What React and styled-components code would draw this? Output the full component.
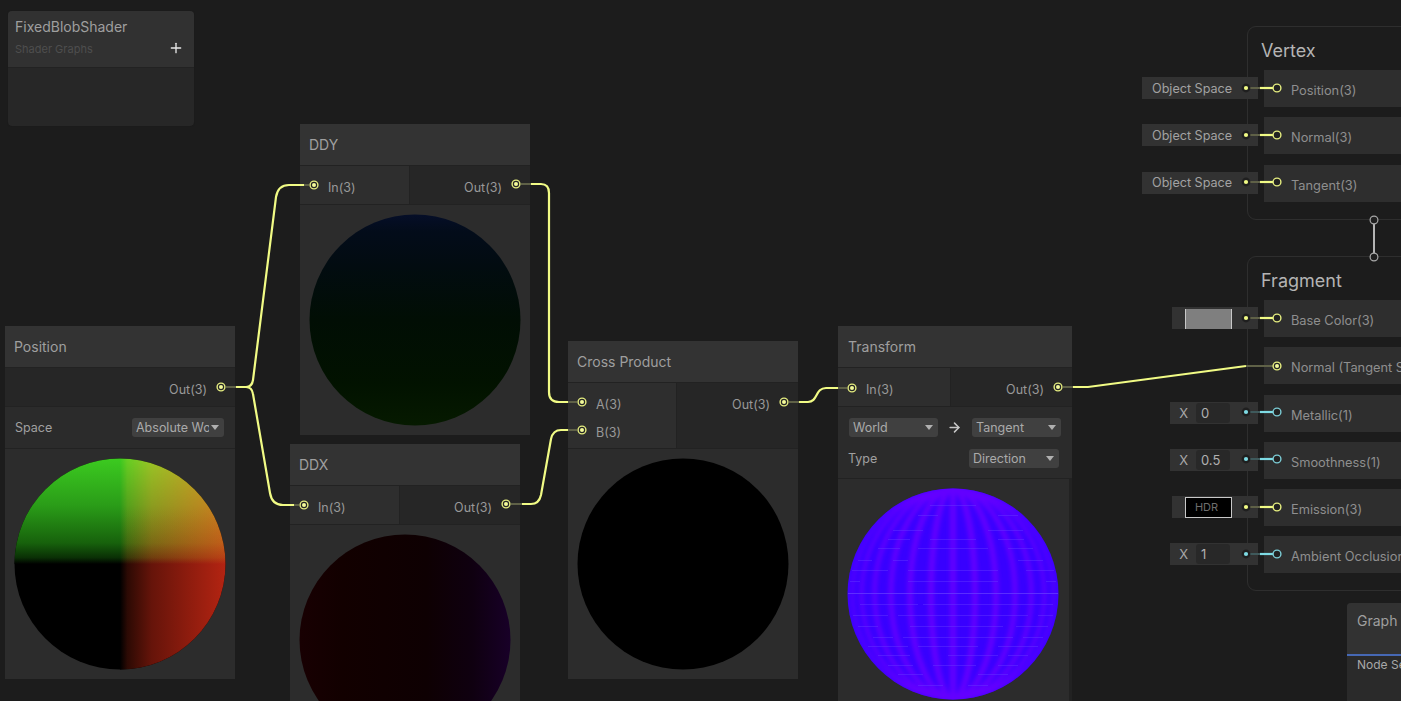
import React from "react";
import styled, { createGlobalStyle } from "styled-components";
import { Plus, ArrowRight } from "lucide-react";

const Global = createGlobalStyle`
  html, body { margin: 0; padding: 0; background: #1c1c1c; overflow: hidden; }
  body { font-family: Inter, "Noto Sans", "Liberation Sans", sans-serif; }
`;

const Canvas = styled.div`
  position: relative;
  width: 1401px;
  height: 701px;
  overflow: hidden;
  background: #1c1c1c;
`;

const Blackboard = styled.section`
  position: absolute;
  left: 8px;
  top: 11px;
  width: 186px;
  height: 115px;
  border-radius: 4px;
  overflow: hidden;
  background: #272727;
  box-shadow: 0 0 1px #141414;
`;
const BoardHead = styled.header`
  position: relative;
  height: 57px;
  padding: 7px 7px 0;
  box-sizing: border-box;
  background: #313131;
  border-bottom: 1px solid #222;
`;
const BoardTitle = styled.div`
  font-size: 14px;
  line-height: 18px;
  color: #9f9f9f;
`;
const BoardSub = styled.div`
  margin-top: 6px;
  font-size: 11px;
  line-height: 14px;
  color: #4e4e4e;
`;
const AddButton = styled.span`
  position: absolute;
  right: 10px;
  top: 29px;
  display: flex;
  color: #e8e8e8;
`;

const Node = styled.section`
  position: absolute;
  left: ${p => p.$left}px;
  top: ${p => p.$top}px;
  width: ${p => p.$width || 230}px;
  display: flex;
  flex-direction: column;
  gap: 1px;
  background: #222;
`;
const Title = styled.header`
  height: 41px;
  padding: 0 ${p => p.$pad || 9}px;
  display: flex;
  align-items: center;
  background: #333;
  font-size: 14px;
  color: #9f9f9f;
`;
const Ports = styled.div`
  display: grid;
  grid-template-columns: ${p => (p.$in ? `${p.$in}px 1fr` : "1fr")};
  gap: 1px;
  height: ${p => p.$height || 38}px;
`;
const PortColumn = styled.div`
  padding: 8px 0 0 ${p => (p.$out ? 0 : 28)}px;
  padding-right: ${p => (p.$out ? 28 : 0)}px;
  box-sizing: border-box;
  background: ${p => (p.$out ? "#262626" : "#2e2e2e")};
  text-align: ${p => (p.$out ? "right" : "left")};
`;
const PortLabel = styled.div`
  height: 28px;
  line-height: 28px;
  font-size: 12.5px;
  color: #999;
`;
const Controls = styled.div`
  height: ${p => p.$height}px;
  padding: 11px 11px 0 10px;
  box-sizing: border-box;
  background: #2b2b2b;
  display: flex;
  flex-direction: column;
  gap: 12px;
`;
const ControlRow = styled.div`
  height: 19px;
  display: flex;
  align-items: center;
  justify-content: ${p => (p.$spread ? "space-between" : "flex-start")};
  padding-right: ${p => p.$inset || 0}px;
  font-size: 12.5px;
  color: #a0a0a0;
`;
const Select = styled.div`
  position: relative;
  width: ${p => p.$width}px;
  height: 19px;
  margin-left: ${p => p.$offset || 0}px;
  box-sizing: border-box;
  padding: 0 15px 0 4px;
  border-radius: 3px;
  background: #404040;
  &::after {
    content: "";
    position: absolute;
    right: 5px;
    top: 7px;
    border-left: 4px solid transparent;
    border-right: 4px solid transparent;
    border-top: 5px solid #b0b0b0;
  }
`;
const SelectText = styled.div`
  overflow: hidden;
  white-space: nowrap;
  font-size: 12.5px;
  line-height: 19px;
  color: #aaa;
`;
const ArrowSlot = styled.span`
  width: 34px;
  padding-right: 2px;
  box-sizing: border-box;
  display: flex;
  justify-content: center;
  color: #c8c8c8;
`;
const Preview = styled.div`
  width: ${p => p.$width || 230}px;
  height: 230px;
  padding: 10px;
  box-sizing: border-box;
  background: #2c2c2c;
  svg { display: block; overflow: visible; }
`;

const Stack = styled.section`
  position: absolute;
  left: 1247px;
  top: ${p => p.$top}px;
  width: 300px;
  height: ${p => p.$height}px;
  box-sizing: border-box;
  padding: 0 0 0 16px;
  border: 1px solid #2e2e2e;
  border-radius: 9px;
`;
const StackTitle = styled.h2`
  margin: 0 0 0 -3px;
  height: 43px;
  padding-top: 12px;
  box-sizing: border-box;
  font-size: 18px;
  line-height: 24px;
  font-weight: 400;
  color: #b4b4b4;
`;
const StackRows = styled.div`
  display: flex;
  flex-direction: column;
  gap: 10.3px;
`;
const Row = styled.div`
  position: relative;
  height: 37px;
  padding: 4px 0 0 27px;
  box-sizing: border-box;
  background: #2e2e2e;
  font-size: 12.8px;
  line-height: 34px;
  color: #8f8f8f;
  white-space: nowrap;
`;
const Pill = styled.div`
  position: absolute;
  right: calc(100% + 6px);
  top: 7px;
  width: ${p => p.$width}px;
  height: 22px;
  box-sizing: border-box;
  background: #323232;
  display: flex;
  align-items: center;
  font-size: 12.6px;
  color: #a2a2a2;
`;
const PillText = styled.span`
  padding: 1px 0 0 10px;
  line-height: 22px;
`;
const Swatch = styled.div`
  width: 47px;
  height: ${p => (p.$dark ? 21 : 20)}px;
  margin: ${p => (p.$dark ? "1px 0 0 13px" : "2px 0 0 13px")};
  padding-right: ${p => (p.$dark ? 4 : 0)}px;
  box-sizing: border-box;
  border: 1px solid #c8c8c8;
  border-width: ${p => (p.$dark ? "1px" : "0 1px")};
  background: ${p => (p.$dark ? "#000" : "#7f7f7f")};
  color: #6e6e6e;
  font-size: 11px;
  line-height: 19px;
  text-align: center;
`;
const AxisLabel = styled.span`
  width: 26px;
  text-align: right;
  padding-right: 8px;
  box-sizing: border-box;
  color: #a8a8a8;
  font-size: 13px;
`;
const NumberField = styled.div`
  width: 34px;
  height: 20px;
  padding-left: 5px;
  box-sizing: border-box;
  border-radius: 3px;
  background: #282828;
  font-size: 13px;
  line-height: 20px;
  color: #b0b0b0;
`;

const Inspector = styled.section`
  position: absolute;
  left: 1347px;
  top: 603px;
  width: 200px;
  height: 98px;
  border-radius: 4px 0 0 0;
  overflow: hidden;
  background: #2a2a2a;
`;
const InspectorHead = styled.header`
  height: 53px;
  padding: 8px 10px 0;
  box-sizing: border-box;
  background: #323232;
  border-bottom: 2px solid #4668b4;
  font-size: 14px;
  line-height: 20px;
  color: #9f9f9f;
`;
const InspectorTab = styled.div`
  padding: 1px 10px;
  font-size: 12px;
  line-height: 16px;
  color: #a8a8a8;
  white-space: nowrap;
`;

const Overlay = styled.svg`
  position: absolute;
  left: 0;
  top: 0;
  pointer-events: none;
`;

/* ---------- previews ---------- */
const R = 105.5;

function PositionSphere() {
  return (
    <svg width="210" height="210" viewBox="0 0 210 210" style={{ isolation: "isolate" }}>
      <defs>
        <clipPath id="posClip"><circle cx="105" cy="105" r={R} /></clipPath>
        <linearGradient id="posG" x1="0" y1="0" x2="0" y2="1">
          <stop offset="0" stopColor="#3ccb20" />
          <stop offset="0.45" stopColor="#2a9c18" />
          <stop offset="0.8" stopColor="#17620c" />
          <stop offset="0.94" stopColor="#0a3005" />
          <stop offset="1" stopColor="#000" />
        </linearGradient>
        <linearGradient id="posFade" x1="0" y1="0" x2="1" y2="0">
          <stop offset="0" stopColor="#000" stopOpacity="0" />
          <stop offset="1" stopColor="#000" stopOpacity="0.42" />
        </linearGradient>
        <linearGradient id="posR" x1="0" y1="0" x2="1" y2="0">
          <stop offset="0" stopColor="#000" />
          <stop offset="0.07" stopColor="#2c0a04" />
          <stop offset="0.3" stopColor="#66140a" />
          <stop offset="0.65" stopColor="#8e1c0e" />
          <stop offset="1" stopColor="#b42412" />
        </linearGradient>
      </defs>
      <circle cx="105" cy="105" r={R} fill="#000" />
      <g clipPath="url(#posClip)">
        <rect x="-1" y="-1" width="212" height="106" fill="url(#posG)" />
        <rect x="105" y="-1" width="106" height="106" fill="url(#posFade)" />
        <rect x="105" y="-1" width="106" height="212" fill="url(#posR)" style={{ mixBlendMode: "plus-lighter" }} />
      </g>
    </svg>
  );
}

function DdySphere() {
  return (
    <svg width="210" height="210" viewBox="0 0 210 210">
      <defs>
        <linearGradient id="ddyFill" x1="0" y1="0" x2="0" y2="1">
          <stop offset="0" stopColor="#050e28" />
          <stop offset="0.08" stopColor="#030c1a" />
          <stop offset="0.25" stopColor="#020c10" />
          <stop offset="0.5" stopColor="#010e04" />
          <stop offset="0.8" stopColor="#021200" />
          <stop offset="1" stopColor="#061a00" />
        </linearGradient>
      </defs>
      <circle cx="105" cy="105" r={R} fill="url(#ddyFill)" />
    </svg>
  );
}

function DdxSphere() {
  return (
    <svg width="210" height="210" viewBox="0 0 210 210">
      <defs>
        <linearGradient id="ddxFill" x1="0" y1="0" x2="1" y2="0">
          <stop offset="0" stopColor="#180002" />
          <stop offset="0.2" stopColor="#120000" />
          <stop offset="0.6" stopColor="#0e0002" />
          <stop offset="0.82" stopColor="#0f0010" />
          <stop offset="1" stopColor="#180028" />
        </linearGradient>
      </defs>
      <circle cx="105" cy="105" r={R} fill="url(#ddxFill)" />
    </svg>
  );
}

function CrossSphere() {
  return (
    <svg width="210" height="210" viewBox="0 0 210 210">
      <circle cx="105" cy="105" r={R} fill="#000" />
    </svg>
  );
}

const meridians = [84, 72, 60, 48, 36, 24, 12, 0].map(d => {
  const a = (d * Math.PI) / 180;
  return { rx: +(R * Math.sin(a)).toFixed(1), w: +(6 * Math.cos(a)).toFixed(1) };
});
/* y, then the x-spans of each faint parallel, in preview pixels */
const parallels = [
  [16, [[82, 128]]],
  [26, [[70, 90], [150, 170]]],
  [41, [[45, 75], [140, 175]]],
  [50, [[40, 62], [82, 128], [150, 176]]],
  [59, [[30, 52], [70, 140], [160, 185]]],
  [71, [[10, 24], [45, 60], [170, 195]]],
  [81, [[4, 40], [60, 150], [178, 206]]],
  [92, [[2, 12], [60, 150], [198, 208]]],
  [104, [[0, 210]]],
  [115, [[12, 70], [75, 205]]],
  [126, [[5, 40], [50, 180], [190, 205]]],
  [137, [[10, 30], [62, 155], [168, 200]]],
  [148, [[25, 45], [55, 165], [175, 195]]],
  [157, [[20, 60], [70, 130], [150, 190]]],
  [166, [[30, 62], [100, 150], [160, 180]]],
  [176, [[40, 65], [85, 128], [150, 170]]],
  [185, [[50, 75], [130, 160]]],
  [196, [[70, 95], [120, 140]]],
];

function NormalSphere() {
  return (
    <svg width="210" height="210" viewBox="0 0 210 210">
      <defs>
        <clipPath id="nClip"><circle cx="105" cy="105" r={R} /></clipPath>
        <filter id="soft" x="-20%" y="-20%" width="140%" height="140%">
          <feGaussianBlur stdDeviation="2" />
        </filter>
      </defs>
      <circle cx="105" cy="105" r={R} fill="#3800ff" />
      <g clipPath="url(#nClip)">
        <g filter="url(#soft)">
          {meridians.map(({ rx, w }) =>
            rx === 0 ? (
              <line key="mid" x1="105" x2="105" y1="-1" y2="211" stroke="#6400ff" strokeWidth={w} />
            ) : (
              <ellipse key={rx} cx="105" cy="105" rx={rx} ry={R} fill="none" stroke="#6400ff" strokeWidth={w} />
            )
          )}
        </g>
        {parallels.map(([y, spans]) =>
          spans.map(([a, b]) => (
            <line key={`${y}-${a}`} x1={a} x2={b} y1={y + 0.5} y2={y + 0.5} stroke="#6a40ff" strokeWidth="1" opacity={y === 104 ? 0.7 : 0.4} />
          ))
        )}
      </g>
    </svg>
  );
}

/* ---------- ports and wires ---------- */
const Y = "#f1fb85";
const C = "#7edbe4";

function LinkedPort({ x, y }) {
  return (
    <g>
      <circle cx={x} cy={y} r="3.9" fill="#262626" stroke="#e6ee80" strokeWidth="1.4" />
      <circle cx={x} cy={y} r="2" fill="#f4fb9a" />
    </g>
  );
}
function OpenPort({ x, y, color = Y }) {
  return <circle cx={x} cy={y} r="3.9" fill="#222" stroke={color} strokeWidth="1.4" />;
}
function DotPort({ x, y, color = Y }) {
  return (
    <g>
      <circle cx={x} cy={y} r="4.4" fill="#1f1f1f" />
      <circle cx={x} cy={y} r="2.1" fill={color} />
    </g>
  );
}
function Wire({ d, color = Y, width = 2.2 }) {
  return <path d={d} fill="none" stroke={color} strokeWidth={width} />;
}
function Dim({ x1, x2, y, color = "#5f6147" }) {
  return <line x1={x1} x2={x2} y1={y} y2={y} stroke={color} strokeWidth="2" />;
}

const inlineLinks = [
  { y: 88, color: Y, dim: "#5f6147" },
  { y: 135, color: Y, dim: "#5f6147" },
  { y: 182, color: Y, dim: "#5f6147" },
  { y: 318, color: Y, dim: "#5f6147" },
  { y: 412, color: C, dim: "#3f5a5c" },
  { y: 459, color: C, dim: "#3f5a5c" },
  { y: 507, color: Y, dim: "#5f6147" },
  { y: 554, color: C, dim: "#3f5a5c" },
];

function Wires() {
  return (
    <Overlay width="1401" height="701" viewBox="0 0 1401 701">
      {/* Position to DDY / DDX */}
      <Dim x1={226} x2={236} y={387} />
      <Wire d="M236 387 H246 Q252 387 253 380 L276 197 Q278 185 289 185 H304" />
      <Wire d="M246 387 Q252 387 253 394 L270 493 Q272 505 283 505 H294" />
      <Dim x1={304} x2={309} y={185} />
      <Dim x1={294} x2={299} y={505} />
      <LinkedPort x={221} y={387} />
      <LinkedPort x={314} y={185} />
      <LinkedPort x={304} y={505} />

      {/* DDY to Cross A */}
      <Dim x1={521} x2={531} y={184} />
      <Wire d="M531 184 H541 Q549 184 549 193 V392 Q549 402 559 402 H568" />
      <Dim x1={568} x2={577} y={402} />
      <LinkedPort x={516} y={184} />
      <LinkedPort x={582} y={402} />

      {/* DDX to Cross B */}
      <Dim x1={511} x2={522} y={504} />
      <Wire d="M522 504 H531 Q539 504 541 495 L551 439 Q553 430 561 430 H568" />
      <Dim x1={568} x2={577} y={430} />
      <LinkedPort x={506} y={504} />
      <LinkedPort x={582} y={430} />

      {/* Cross to Transform */}
      <Dim x1={789} x2={799} y={402} />
      <Wire d="M799 402 H808 C818 402 815 388 826 388 H838" />
      <Dim x1={838} x2={847} y={388} />
      <LinkedPort x={784} y={402} />
      <LinkedPort x={852} y={388} />

      {/* Transform to Normal */}
      <Dim x1={1063} x2={1073} y={387} />
      <Wire d="M1073 387 H1088 L1246 366" />
      <Dim x1={1246} x2={1273} y={366} />
      <LinkedPort x={1058} y={387} />
      <LinkedPort x={1277} y={366} />

      {/* Inline constants */}
      {inlineLinks.map(l => (
        <g key={l.y}>
          <Dim x1={1250} x2={1260} y={l.y} color={l.dim} />
          <Wire d={`M1260 ${l.y} H1273`} color={l.color} />
          <DotPort x={1246} y={l.y} color={l.color} />
          <OpenPort x={1277} y={l.y} color={l.color === Y ? "#e6ee80" : "#7ccdd6"} />
        </g>
      ))}

      {/* Vertex to Fragment */}
      <line x1="1374" x2="1374" y1="224" y2="253" stroke="#b4b4b4" strokeWidth="2" />
      <circle cx="1374" cy="220" r="3.9" fill="#1f1f1f" stroke="#a8a8a8" strokeWidth="1.2" />
      <circle cx="1374" cy="257" r="3.9" fill="#1f1f1f" stroke="#a8a8a8" strokeWidth="1.2" />
    </Overlay>
  );
}

function FloatField({ value }) {
  return (
    <Pill $width={88}>
      <AxisLabel>X</AxisLabel>
      <NumberField>{value}</NumberField>
    </Pill>
  );
}

export default function App() {
  return (
    <Canvas>
      <Global />

      <Blackboard>
        <BoardHead>
          <BoardTitle>FixedBlobShader</BoardTitle>
          <BoardSub>Shader Graphs</BoardSub>
          <AddButton><Plus size={16} strokeWidth={2} /></AddButton>
        </BoardHead>
      </Blackboard>

      <Node $left={5} $top={326}>
        <Title>Position</Title>
        <Ports>
          <PortColumn $out><PortLabel>Out(3)</PortLabel></PortColumn>
        </Ports>
        <Controls $height={41}>
          <ControlRow $spread>
            Space
            <Select $width={92}><SelectText>Absolute World</SelectText></Select>
          </ControlRow>
        </Controls>
        <Preview><PositionSphere /></Preview>
      </Node>

      <Node $left={300} $top={124}>
        <Title>DDY</Title>
        <Ports $in={109}>
          <PortColumn><PortLabel>In(3)</PortLabel></PortColumn>
          <PortColumn $out><PortLabel>Out(3)</PortLabel></PortColumn>
        </Ports>
        <Preview><DdySphere /></Preview>
      </Node>

      <Node $left={290} $top={444}>
        <Title>DDX</Title>
        <Ports $in={109}>
          <PortColumn><PortLabel>In(3)</PortLabel></PortColumn>
          <PortColumn $out><PortLabel>Out(3)</PortLabel></PortColumn>
        </Ports>
        <Preview><DdxSphere /></Preview>
      </Node>

      <Node $left={568} $top={341}>
        <Title>Cross Product</Title>
        <Ports $in={108} $height={65}>
          <PortColumn>
            <PortLabel>A(3)</PortLabel>
            <PortLabel>B(3)</PortLabel>
          </PortColumn>
          <PortColumn $out><PortLabel>Out(3)</PortLabel></PortColumn>
        </Ports>
        <Preview><CrossSphere /></Preview>
      </Node>

      <Node $left={838} $top={326} $width={234}>
        <Title $pad={10}>Transform</Title>
        <Ports $in={112}>
          <PortColumn><PortLabel>In(3)</PortLabel></PortColumn>
          <PortColumn $out><PortLabel>Out(3)</PortLabel></PortColumn>
        </Ports>
        <Controls $height={71}>
          <ControlRow>
            <Select $width={89} $offset={1}><SelectText>World</SelectText></Select>
            <ArrowSlot><ArrowRight size={15} strokeWidth={2.4} /></ArrowSlot>
            <Select $width={89}><SelectText>Tangent</SelectText></Select>
          </ControlRow>
          <ControlRow $spread $inset={2}>
            <span>Type</span>
            <Select $width={90}><SelectText>Direction</SelectText></Select>
          </ControlRow>
        </Controls>
        <Preview $width={231}><NormalSphere /></Preview>
      </Node>

      <Stack $top={26} $height={194}>
        <StackTitle>Vertex</StackTitle>
        <StackRows>
          <Row>Position(3)<Pill $width={116}><PillText>Object Space</PillText></Pill></Row>
          <Row>Normal(3)<Pill $width={116}><PillText>Object Space</PillText></Pill></Row>
          <Row>Tangent(3)<Pill $width={116}><PillText>Object Space</PillText></Pill></Row>
        </StackRows>
      </Stack>

      <Stack $top={256} $height={335}>
        <StackTitle>Fragment</StackTitle>
        <StackRows>
          <Row>Base Color(3)<Pill $width={86}><Swatch /></Pill></Row>
          <Row>Normal (Tangent Space)(3)</Row>
          <Row>Metallic(1)<FloatField value="0" /></Row>
          <Row>Smoothness(1)<FloatField value="0.5" /></Row>
          <Row>Emission(3)<Pill $width={86}><Swatch $dark>HDR</Swatch></Pill></Row>
          <Row>Ambient Occlusion(1)<FloatField value="1" /></Row>
        </StackRows>
      </Stack>

      <Inspector>
        <InspectorHead>Graph Inspector</InspectorHead>
        <InspectorTab>Node Settings</InspectorTab>
      </Inspector>

      <Wires />
    </Canvas>
  );
}
